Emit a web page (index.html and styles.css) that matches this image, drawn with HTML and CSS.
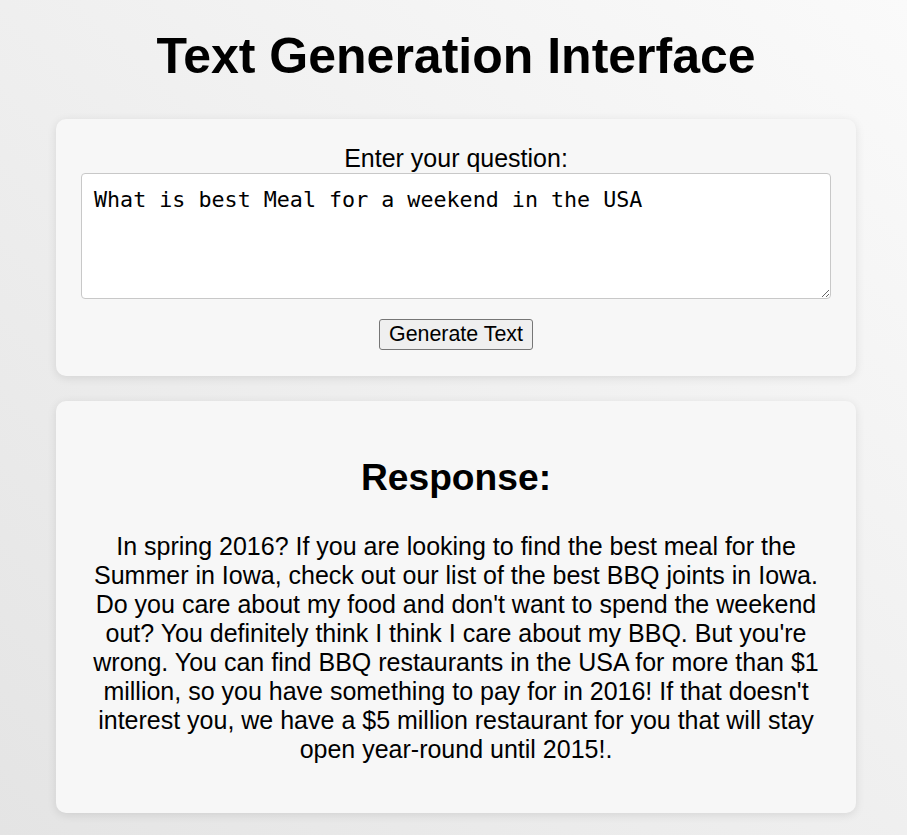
FILE: index.html
```html
<!DOCTYPE html>
<html lang="en">
<head>
<meta charset="utf-8">
<title>Text Generation Interface</title>
<link rel="stylesheet" href="styles.css">
</head>
<body>
<main class="page">
  <h1 class="title">Text Generation Interface</h1>
  <form class="card ask-card">
    <label class="ask-label" for="question">Enter your question:</label>
    <textarea id="question" class="ask-input">What is best Meal for a weekend in the USA</textarea>
    <button type="button" class="ask-button">Generate Text</button>
  </form>
  <section class="card response-card">
    <h2 class="response-title">Response:</h2>
    <p class="response-text">In spring 2016? If you are looking to find the best meal for the Summer in Iowa, check out our list of the best BBQ joints in Iowa. Do you care about my food and don't want to spend the weekend out? You definitely think I think I care about my BBQ. But you're wrong. You can find BBQ restaurants in the USA for more than $1 million, so you have something to pay for in 2016! If that doesn't interest you, we have a $5 million restaurant for you that will stay open year-round until 2015!.</p>
  </section>
</main>
</body>
</html>
```
FILE: styles.css
```css
html {
  min-height: 100%;
  background: linear-gradient(to top right, #e4e4e4, #fafafa);
}
body {
  margin: 0;
  padding-left: 5px;
  font-family: "Liberation Sans", Arial, sans-serif;
  color: #000;
}
.page {
  width: 800px;
  margin: 0 auto;
  padding: 27px 0 23px;
  display: flex;
  flex-direction: column;
  gap: 25px;
}
.title {
  margin: 0 0 9px;
  font-size: 50px;
  font-weight: bold;
  text-align: center;
}
.card {
  background: #f7f7f7;
  border-radius: 10px;
  box-shadow: 0 2px 10px rgba(0, 0, 0, 0.1);
  padding: 25px;
}
.ask-card {
  display: flex;
  flex-direction: column;
  align-items: center;
  padding-bottom: 26px;
}
.ask-label {
  font-size: 25px;
}
.ask-input {
  box-sizing: border-box;
  width: 100%;
  height: 126px;
  margin: 0;
  padding: 13px 12px;
  border: 1px solid #c8c8c8;
  border-radius: 4px;
  background: #fff;
  font-family: "DejaVu Sans Mono", monospace;
  font-size: 21.7px;
  color: #000;
}
.ask-button {
  margin-top: 20px;
  padding: 2px 9px;
  font-family: "Liberation Sans", Arial, sans-serif;
  font-size: 21.4px;
  color: #000;
  background: #efefef;
  border: 1px solid #767676;
  border-radius: 3px;
}
.response-card {
  text-align: center;
}
.response-title {
  margin: 30px 0 33px;
  font-size: 37.2px;
  font-weight: bold;
}
.response-text {
  margin: 0 0 24px;
  font-size: 25px;
}
```
